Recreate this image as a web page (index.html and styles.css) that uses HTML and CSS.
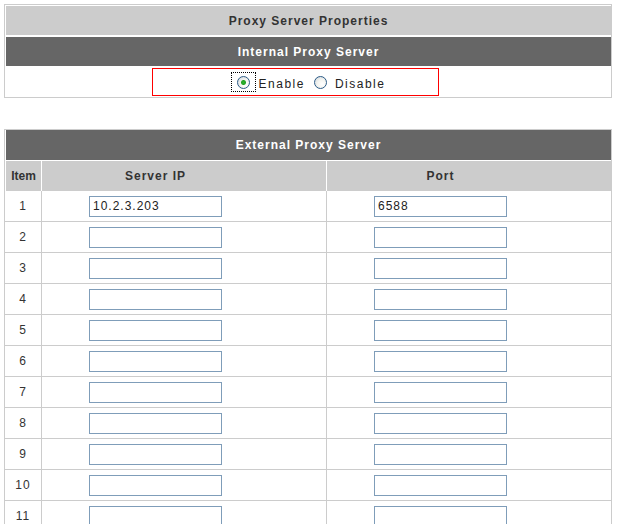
FILE: index.html
```html
<!DOCTYPE html>
<html>
<head>
<meta charset="utf-8">
<link rel="stylesheet" href="styles.css">
</head>
<body>
<div class="props">
  <div class="bar bar-light">Proxy Server Properties</div>
  <div class="bar bar-dark">Internal Proxy Server</div>
  <div class="choice-row">
    <span class="focus"><span class="radio checked"></span></span>
    <span class="label label-enable">Enable</span>
    <span class="radio radio-off"></span>
    <span class="label">Disable</span>
    <div class="mark"></div>
  </div>
</div>

<div class="ext">
  <div class="bar bar-dark ext-title">External Proxy Server</div>
  <div class="grid-row head">
    <div class="cell item">Item</div>
    <div class="cell wide">Server IP</div>
    <div class="cell wide last">Port</div>
  </div>
  <div class="grid-row">
    <div class="cell item">1</div>
    <div class="cell wide"><input class="field" type="text" value="10.2.3.203"></div>
    <div class="cell wide last"><input class="field" type="text" value="6588"></div>
  </div>
  <div class="grid-row">
    <div class="cell item">2</div>
    <div class="cell wide"><input class="field" type="text"></div>
    <div class="cell wide last"><input class="field" type="text"></div>
  </div>
  <div class="grid-row">
    <div class="cell item">3</div>
    <div class="cell wide"><input class="field" type="text"></div>
    <div class="cell wide last"><input class="field" type="text"></div>
  </div>
  <div class="grid-row">
    <div class="cell item">4</div>
    <div class="cell wide"><input class="field" type="text"></div>
    <div class="cell wide last"><input class="field" type="text"></div>
  </div>
  <div class="grid-row">
    <div class="cell item">5</div>
    <div class="cell wide"><input class="field" type="text"></div>
    <div class="cell wide last"><input class="field" type="text"></div>
  </div>
  <div class="grid-row">
    <div class="cell item">6</div>
    <div class="cell wide"><input class="field" type="text"></div>
    <div class="cell wide last"><input class="field" type="text"></div>
  </div>
  <div class="grid-row">
    <div class="cell item">7</div>
    <div class="cell wide"><input class="field" type="text"></div>
    <div class="cell wide last"><input class="field" type="text"></div>
  </div>
  <div class="grid-row">
    <div class="cell item">8</div>
    <div class="cell wide"><input class="field" type="text"></div>
    <div class="cell wide last"><input class="field" type="text"></div>
  </div>
  <div class="grid-row">
    <div class="cell item">9</div>
    <div class="cell wide"><input class="field" type="text"></div>
    <div class="cell wide last"><input class="field" type="text"></div>
  </div>
  <div class="grid-row">
    <div class="cell item">10</div>
    <div class="cell wide"><input class="field" type="text"></div>
    <div class="cell wide last"><input class="field" type="text"></div>
  </div>
  <div class="grid-row">
    <div class="cell item">11</div>
    <div class="cell wide"><input class="field" type="text"></div>
    <div class="cell wide last"><input class="field" type="text"></div>
  </div>
</div>
</body>
</html>
```
FILE: styles.css
```css
html, body {
  margin: 0;
  padding: 0;
  background: #fff;
  overflow: hidden;
}
body {
  font-family: "Liberation Sans", Arial, sans-serif;
  font-size: 12px;
  color: #333;
}

.props {
  box-sizing: border-box;
  width: 608px;
  margin: 4px 0 0 4px;
  border: 1px solid #cccccc;
  padding: 1px 0 0 1px;
}
.bar {
  display: flex;
  align-items: center;
  justify-content: center;
  height: 29px;
  font-weight: bold;
  font-size: 12px;
  letter-spacing: 1px;
}
.bar-light {
  background: #cccccc;
  color: #333;
  margin-bottom: 2px;
}
.bar-dark {
  background: #666666;
  color: #fff;
}

.choice-row {
  position: relative;
  height: 31px;
  display: flex;
  align-items: center;
  justify-content: center;
  margin-left: -1px;
}
.focus {
  box-sizing: border-box;
  width: 25px;
  height: 20px;
  margin-top: 1px;
  border: 1px dotted #000;
  display: flex;
  align-items: center;
  justify-content: center;
}
.radio {
  box-sizing: border-box;
  display: block;
  width: 13px;
  height: 13px;
  border-radius: 50%;
  border: 1px solid #2c5b86;
  background: radial-gradient(circle at 65% 65%, #ffffff 0%, #f4f4f0 45%, #c9d3dc 100%);
}
.radio.checked {
  background:
    radial-gradient(circle at 50% 50%, #2fb52f 0px, #21a121 2px, rgba(33,161,33,0) 3px),
    radial-gradient(circle at 65% 65%, #ffffff 0%, #f4f4f0 45%, #c9d3dc 100%);
}
.label {
  font-size: 12px;
  letter-spacing: 1.5px;
  color: #222;
  margin-left: 3px;
  margin-top: 4px;
}
.label-enable {
  margin-right: 9px;
}
.radio-off {
  margin-top: 1px;
  margin-right: 5px;
}
.mark {
  position: absolute;
  left: 147px;
  top: 2px;
  width: 287px;
  height: 28px;
  box-sizing: border-box;
  border: 1px solid #ff0000;
}

.ext {
  box-sizing: border-box;
  width: 608px;
  margin: 31px 0 0 4px;
  border: 1px solid #cccccc;
  border-bottom: none;
}
.ext-title {
  height: 30px;
  margin-left: 1px;
  margin-bottom: 1px;
}
.grid-row {
  display: grid;
  grid-template-columns: 37px 285px 284px;
  height: 31px;
  box-sizing: border-box;
  border-bottom: 1px solid #cccccc;
}
.grid-row.head {
  height: 30px;
  border-bottom: none;
}
.cell {
  display: flex;
  align-items: center;
  justify-content: center;
  box-sizing: border-box;
  border-right: 1px solid #cccccc;
  letter-spacing: 1px;
}
.cell.last {
  border-right: none;
}
.cell.wide {
  padding-right: 57px;
}
.head .cell {
  background: #cccccc;
  border-right: 1px solid #ffffff;
  font-weight: bold;
  color: #333;
}
.head .cell.item {
  margin-left: 1px;
  letter-spacing: 0;
}
.head .cell.last {
  border-right: none;
}
.field {
  box-sizing: border-box;
  width: 133px;
  height: 21px;
  margin: 0;
  border: 1px solid #7f9db9;
  padding: 0 3px;
  font-family: "Liberation Sans", Arial, sans-serif;
  font-size: 12px;
  letter-spacing: 1px;
  color: #222;
  background: #fff;
  outline: none;
}
```
